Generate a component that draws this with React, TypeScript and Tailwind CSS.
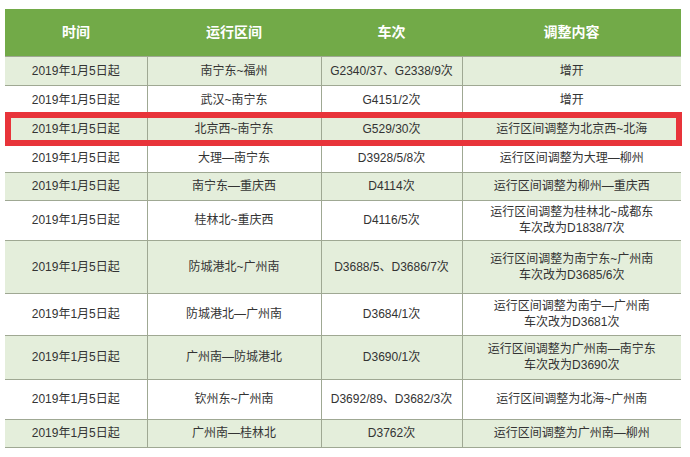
import React from "react"

type Row = {
  time: string
  route: string
  train: string
  change: string[]
  h: string
  highlight?: boolean
}

const rows: Row[] = [
  { time: "2019年1月5日起", route: "南宁东~福州", train: "G2340/37、G2338/9次", change: ["增开"], h: "h-[29px]" },
  { time: "2019年1月5日起", route: "武汉~南宁东", train: "G4151/2次", change: ["增开"], h: "h-[29px]" },
  { time: "2019年1月5日起", route: "北京西~南宁东", train: "G529/30次", change: ["运行区间调整为北京西~北海"], h: "h-[29px]", highlight: true },
  { time: "2019年1月5日起", route: "大理—南宁东", train: "D3928/5/8次", change: ["运行区间调整为大理—柳州"], h: "h-[29px]" },
  { time: "2019年1月5日起", route: "南宁东—重庆西", train: "D4114次", change: ["运行区间调整为柳州—重庆西"], h: "h-[28px]" },
  { time: "2019年1月5日起", route: "桂林北~重庆西", train: "D4116/5次", change: ["运行区间调整为桂林北~成都东", "车次改为D1838/7次"], h: "h-[40px]" },
  { time: "2019年1月5日起", route: "防城港北~广州南", train: "D3688/5、D3686/7次", change: ["运行区间调整为南宁东~广州南", "车次改为D3685/6次"], h: "h-[53px]" },
  { time: "2019年1月5日起", route: "防城港北—广州南", train: "D3684/1次", change: ["运行区间调整为南宁—广州南", "车次改为D3681次"], h: "h-[42px]" },
  { time: "2019年1月5日起", route: "广州南—防城港北", train: "D3690/1次", change: ["运行区间调整为广州南—南宁东", "车次改为D3690次"], h: "h-[44px]" },
  { time: "2019年1月5日起", route: "钦州东~广州南", train: "D3692/89、D3682/3次", change: ["运行区间调整为北海~广州南"], h: "h-[40px]" },
  { time: "2019年1月5日起", route: "广州南—桂林北", train: "D3762次", change: ["运行区间调整为广州南—柳州"], h: "h-[28px]" },
]

const cell = "border border-[#9fa893] text-center align-middle p-0"

export default function App() {
  return (
    <div
      className="w-[690px] h-[457px] bg-white pt-[9px] pl-[5px] text-[#333333]"
      style={{ fontFamily: '"Liberation Sans", "Noto Sans CJK SC", sans-serif' }}
    >
      <table className="w-[676px] border-collapse table-fixed text-[12px] leading-[16px]">
        <colgroup>
          <col className="w-[142px]" />
          <col className="w-[174px]" />
          <col className="w-[141px]" />
          <col className="w-[219px]" />
        </colgroup>
        <thead>
          <tr className="h-[47px] bg-[#72aa48] text-white text-[14px] font-bold">
            <th className="border-0 p-0">时间</th>
            <th className="border-0 p-0">运行区间</th>
            <th className="border-0 p-0">车次</th>
            <th className="border-0 p-0">调整内容</th>
          </tr>
        </thead>
        <tbody>
          {rows.map((r, i) => (
            <tr key={i} className={`${r.h} ${i % 2 === 0 ? "bg-[#e4eedb]" : "bg-white"}`}>
              <td className={`${cell} border-l-0 relative`}>
                {r.time}
                {r.highlight ? (
                  <div className="absolute -top-[3px] -bottom-[3px] left-0 w-[677px] border-[6px] border-[#e8343a] pointer-events-none" />
                ) : null}
              </td>
              <td className={cell}>{r.route}</td>
              <td className={cell}>{r.train}</td>
              <td className={`${cell} border-r-0`}>
                {r.change.map((c, j) => (
                  <div key={j}>{c}</div>
                ))}
              </td>
            </tr>
          ))}
        </tbody>
      </table>
    </div>
  )
}
